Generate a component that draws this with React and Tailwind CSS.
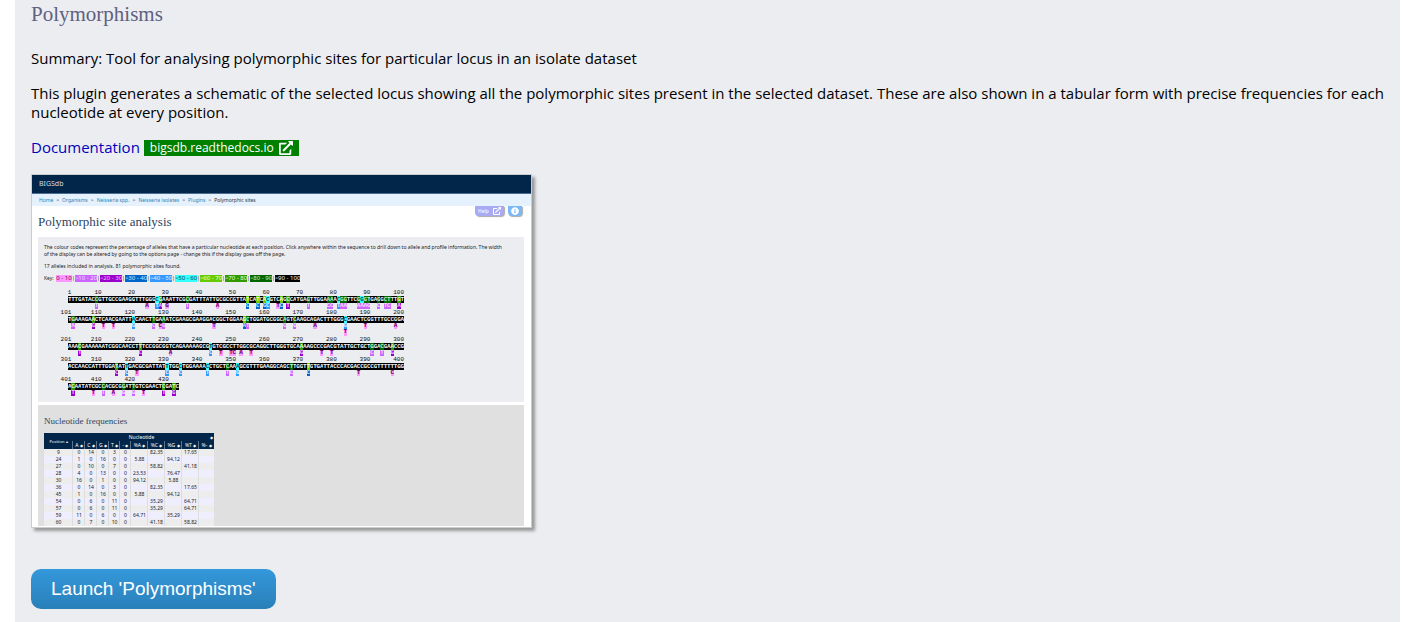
import { FaInfoCircle } from "react-icons/fa";

const PINK = "bg-[#ff99ff] text-[#5a005a]";
const LILAC = "bg-[#cc66ff] text-[#f6dcff]";
const PURPLE = "bg-[#9900cc] text-[#f0c8ff]";
const BLUE = "bg-[#0066cc] text-[#d0e6ff]";
const SKY = "bg-[#3399ff] text-[#e0f0ff]";
const CYAN = "bg-[#33ffff] text-[#004466]";
const LIME = "bg-[#66cc00] text-[#f0ffd8]";
const GREEN = "bg-[#339900] text-[#e0ffd0]";
const FOREST = "bg-[#006600] text-[#c8f0c8]";
const BLACK = "bg-black text-[#f4f4f4]";

const key = [
  ["0 - 10", PINK],
  [">10 - 20", LILAC],
  [">20 - 30", PURPLE],
  [">30 - 40", BLUE],
  [">40 - 50", SKY],
  [">50 - 60", CYAN],
  [">60 - 70", LIME],
  [">70 - 80", GREEN],
  [">80 - 90", FOREST],
  [">90 - 100", BLACK],
];

// Each site: [column, consensus colour, variant letter, variant colour, second variant letter]
const blocks = [
  {
    start: 1,
    seq: "TTTGATACCGTTGCCGAAGGTTTGGGCGAAATTCGCGATTTATTGCGCCGTTATCATCACGTCAGCCATGAGTTGGAAAACGGTTCGGGTGAGGCTTTGT",
    sites: [
      [9, FOREST, "T", LILAC], [24, BLACK, "A", PINK], [27, CYAN, "T", SKY], [28, GREEN, "A", PURPLE],
      [30, BLACK, "G", PINK], [36, FOREST, "T", LILAC], [45, BLACK, "A", PINK], [54, LIME, "C", BLUE],
      [57, LIME, "C", BLUE], [59, LIME, "G", BLUE], [60, CYAN, "C", SKY], [63, BLACK, "T", PINK],
      [64, LIME, "C", BLUE], [66, GREEN, "T", PURPLE], [72, FOREST, "T", LILAC], [78, FOREST, "C", LILAC],
      [79, FOREST, "C", LILAC], [81, CYAN, "T", SKY], [82, FOREST, "A", LILAC], [83, FOREST, "A", LILAC],
      [87, FOREST, "A", LILAC], [88, CYAN, "A", LILAC], [89, FOREST, "A", LILAC], [90, FOREST, "G", LILAC],
      [93, FOREST, "C", LILAC], [95, FOREST, "T", LILAC], [96, FOREST, "C", LILAC], [99, GREEN, "A", PURPLE],
    ],
  },
  {
    start: 101,
    seq: "TGAAAGAACTCAACGAATTACAACTTGAAATCGAAGCGAAGGACGGCTGGAAGCTGGATGCGGCAGTCAAGCAGACTTTGGGCGAACTCGGTTTGCCGGA",
    sites: [
      [2, FOREST, "A", LILAC], [8, GREEN, "G", PURPLE], [11, BLACK, "T", PINK], [14, BLACK, "T", PINK],
      [20, CYAN, "G", SKY], [26, FOREST, "C", LILAC], [28, BLACK, "C", PINK], [29, FOREST, "G", LILAC],
      [44, BLACK, "T", PINK], [53, LIME, "A", BLUE], [54, FOREST, "T", LILAC], [65, FOREST, "G", LILAC],
      [68, FOREST, "G", LILAC], [74, BLACK, "A", PINK], [83, CYAN, "G", SKY, "T"], [89, BLACK, "T", PINK],
      [98, BLACK, "A", PINK],
    ],
  },
  {
    start: 201,
    seq: "AAACGAAAAAATCGGCAACCTTTCCGGCGGTCAGAAAAAGCGTGTCGCCTTGGCGCAGGCTTGGGTGCAAAAGCCCGACGTATTGCTGCTGGACGAACCG",
    sites: [
      [4, GREEN, "T", PURPLE], [22, GREEN, "C", PURPLE], [31, BLACK, "A", PINK], [43, CYAN, "C", SKY],
      [46, BLACK, "T", PINK], [49, BLACK, "T", PINK], [50, BLACK, "C", PINK], [52, BLACK, "A", PINK],
      [55, BLACK, "T", PINK], [70, GREEN, "G", PURPLE], [76, BLACK, "T", PINK], [79, BLACK, "T", PINK],
      [91, FOREST, "C", LILAC], [94, FOREST, "T", LILAC], [97, GREEN, "G", PURPLE],
    ],
  },
  {
    start: 301,
    seq: "ACCAACCATTTGGATATTGACGCGATTATTTGGCTGGAAAACCTGCTCAAAGCGTTTGAAGGCAGCTTGGTTGTGATTACCCACGACCGCCGTTTTTTGG",
    sites: [
      [15, GREEN, "C", PURPLE], [18, CYAN, "C", SKY], [21, BLACK, "T", PINK], [30, CYAN, "C", SKY],
      [34, CYAN, "C", SKY], [42, CYAN, "T", SKY], [48, FOREST, "T", LILAC], [51, CYAN, "G", SKY],
      [67, FOREST, "C", LILAC], [72, LIME, "C", BLUE], [87, BLACK, "T", PINK], [97, BLACK, "C", PINK],
    ],
  },
  {
    start: 401,
    seq: "ACAATATCGCCACGCGGATTGTCGAACTCGATC",
    sites: [
      [2, GREEN, "T", PURPLE], [8, BLACK, "T", PINK], [11, FOREST, "T", LILAC], [14, BLACK, "A", PINK],
      [17, FOREST, "G", LILAC], [20, FOREST, "G", LILAC], [23, BLACK, "T", PINK], [29, GREEN, "T", PURPLE],
      [32, GREEN, "G", PURPLE],
    ],
  },
];

const columns = ["A", "C", "G", "T", "-", "%A", "%C", "%G", "%T", "%-"];

const frequencies = [
  [9, 0, 14, 0, 3, 0, "", "82.35", "", "17.65", ""],
  [24, 1, 0, 16, 0, 0, "5.88", "", "94.12", "", ""],
  [27, 0, 10, 0, 7, 0, "", "58.82", "", "41.18", ""],
  [28, 4, 0, 13, 0, 0, "23.53", "", "76.47", "", ""],
  [30, 16, 0, 1, 0, 0, "94.12", "", "5.88", "", ""],
  [36, 0, 14, 0, 3, 0, "", "82.35", "", "17.65", ""],
  [45, 1, 0, 16, 0, 0, "5.88", "", "94.12", "", ""],
  [54, 0, 6, 0, 11, 0, "", "35.29", "", "64.71", ""],
  [57, 0, 6, 0, 11, 0, "", "35.29", "", "64.71", ""],
  [59, 11, 0, 6, 0, 0, "64.71", "", "35.29", "", ""],
  [60, 0, 7, 0, 10, 0, "", "41.18", "", "58.82", ""],
];

function ExternalLinkIcon({ className }) {
  return (
    <svg viewBox="0 0 512 512" className={className} fill="currentColor" aria-hidden="true">
      <path d="M448 279V464a48 48 0 0 1-48 48H48a48 48 0 0 1-48-48V112a48 48 0 0 1 48-48h248l-64 64H64v320h320V343zM488 0H364c-21 0-32 26-17 41l36 36-243.500 243.500a24 24 0 0 0 0 34L157.500 372.500a24 24 0 0 0 34 0L435 129l36 36c15 15 41 4.500 41-17V24a24 24 0 0 0-24-24z" />
    </svg>
  );
}

function SequenceBlock({ start, seq, sites }) {
  const colours = Object.fromEntries(sites.map(([pos, colour]) => [pos, colour]));
  const labels = [1];
  for (let n = 10; n <= seq.length; n += 10) labels.push(n);
  const second = sites.filter((site) => site[4]);
  return (
    <div className="w-[336px]">
      <div className="grid h-[7px] grid-cols-[repeat(100,minmax(0,1fr))] text-[6px] leading-[7px] text-[#111]">
        {labels.map((n) => (
          <span key={n} className="flex justify-end" style={{ gridColumnStart: n, gridRowStart: 1 }}>
            {start + n - 1}
          </span>
        ))}
      </div>
      <div className="grid h-[7px] grid-cols-[repeat(100,minmax(0,1fr))] text-[6px] leading-[7px] font-bold">
        {[...seq].map((base, i) => (
          <span key={i} className={`flex justify-center ${colours[i + 1] || BLACK}`}>
            {base}
          </span>
        ))}
      </div>
      <div className="grid h-[6px] grid-cols-[repeat(100,minmax(0,1fr))] text-[6px] leading-[6px] font-bold">
        {sites.map(([pos, , base, colour]) => (
          <span key={pos} className={`flex justify-center ${colour}`} style={{ gridColumnStart: pos, gridRowStart: 1 }}>
            {base}
          </span>
        ))}
      </div>
      {second.length > 0 && (
        <div className="grid h-[7px] grid-cols-[repeat(100,minmax(0,1fr))] text-[6px] leading-[6px] font-bold">
          {second.map((site) => (
            <span key={site[0]} className={`flex justify-center ${PINK}`} style={{ gridColumnStart: site[0] }}>
              {site[4]}
            </span>
          ))}
        </div>
      )}
    </div>
  );
}

function FrequencyTable() {
  return (
    <table className="mt-[6px] w-[170px] table-fixed border-collapse text-center text-[5px] leading-[7px] text-[#222]">
      <colgroup>
        <col className="w-[29px]" />
        <col className="w-[12px]" />
        <col className="w-[12px]" />
        <col className="w-[12px]" />
        <col className="w-[11px]" />
        <col className="w-[11px]" />
        <col className="w-[17px]" />
        <col className="w-[17px]" />
        <col className="w-[17px]" />
        <col className="w-[17px]" />
        <col className="w-[15px]" />
      </colgroup>
      <thead className="bg-[#02264a] text-white">
        <tr className="h-[8px]">
          <th rowSpan={2} className="p-0 text-[4px] font-normal">Position ▴</th>
          <th colSpan={10} className="p-0 font-normal">
            <div className="flex items-center pr-px">
              <span className="flex-1">Nucleotide</span>
              <span className="text-[4px]">◆</span>
            </div>
          </th>
        </tr>
        <tr className="h-[8px]">
          {columns.map((name) => (
            <th key={name} className="p-0 font-normal whitespace-nowrap shadow-[-1px_0_0_#5c7590]">
              {name} <span className="text-[4px]">◆</span>
            </th>
          ))}
        </tr>
      </thead>
      <tbody>
        {frequencies.map((row) => (
          <tr key={row[0]} className="h-[7px] odd:bg-[#ededed] even:bg-[#eeeeff]">
            {row.map((value, i) => (
              <td key={i} className="p-0 shadow-[-1px_0_0_#dedede]">{value}</td>
            ))}
          </tr>
        ))}
      </tbody>
    </table>
  );
}

function AnalysisPreview() {
  return (
    <figure className="mt-[17px] h-[354px] w-[501px] overflow-hidden border border-[#cccccc] bg-white font-['Noto_Sans',sans-serif] text-[5px] shadow-[3px_3px_3px_#999999]">
      <div className="flex h-[19px] items-center border-b border-[#4a6d94] bg-[#02264a] pl-[7px] text-[7px] leading-[16px] text-[#d5dce5]">
        BIGSdb
      </div>
      <div className="flex h-[12px] items-center gap-[3px] bg-[#e6f1fe] pl-[7px] text-[#2a84b4]">
        {["Home", "Organisms", "Neisseria spp.", "Neisseria isolates", "Plugins"].map((crumb) => (
          <span key={crumb} className="flex gap-[3px]">
            {crumb} <span className="text-[#333]">&gt;</span>
          </span>
        ))}
        <span className="text-[#333]">Polymorphic sites</span>
      </div>
      <div className="flex h-[31px] justify-between pr-[9px] pl-[6px]">
        <h3 className="pt-[7px] font-['Liberation_Serif',serif] text-[13px] leading-[18px] text-[#2c4460]">
          Polymorphic site analysis
        </h3>
        <div className="flex gap-[4px]">
          <span className="flex h-[10px] w-[29px] items-center justify-center gap-[4px] rounded-b-sm bg-[#aaaaf4] text-[5px] text-white shadow-[1px_1px_1px_#aaa]">
            Help <ExternalLinkIcon className="size-[8px]" />
          </span>
          <span className="flex h-[10px] w-[14px] items-center justify-center rounded-b-sm bg-[#7ab8f8] text-white shadow-[1px_1px_1px_#aaa]">
            <FaInfoCircle className="size-[8px]" />
          </span>
        </div>
      </div>
      <div className="mr-[7px] ml-[6px] h-[165px] bg-[#ecedf1] px-[6px] pt-[7px] leading-[7px] text-[#222]">
        <p className="pr-[16px]">
          The colour codes represent the percentage of alleles that have a particular nucleotide at each position. Click
          anywhere within the sequence to drill down to allele and profile information. The width of the display can be
          altered by going to the options page - change this if the display goes off the page.
        </p>
        <p className="mt-[5px]">17 alleles included in analysis. 81 polymorphic sites found.</p>
        <div className="mt-[5px] flex h-[7px] items-center">
          <span className="w-[12px]">Key:</span>
          {key.map(([label, colour], i) => (
            <span key={label} className="flex">
              {i > 0 && <span className="w-[3px] text-center">|</span>}
              <span
                className={`flex justify-center text-[6px] whitespace-nowrap ${i === 0 ? "w-[16px]" : i === 9 ? "w-[25px]" : "w-[22px]"} ${colour}`}
              >
                {label}
              </span>
            </span>
          ))}
        </div>
        <div className="mt-[7px] ml-[24px] font-['Liberation_Mono',monospace]">
          {blocks.map((block) => (
            <SequenceBlock key={block.start} {...block} />
          ))}
        </div>
      </div>
      <div className="mt-[3px] mr-[7px] ml-[6px] bg-[#e0e0e0] px-[6px] pt-[10px]">
        <h4 className="font-['Liberation_Serif',serif] text-[9px] leading-[12px] text-[#2c4460]">
          Nucleotide frequencies
        </h4>
        <FrequencyTable />
      </div>
    </figure>
  );
}

export default function App() {
  return (
    <div className="min-h-screen bg-white pr-[13px] pl-[15px]">
      <main className="min-h-screen bg-[#ecedf1] px-4 pb-[13px] font-['Open_Sans',sans-serif] text-[15px] leading-[19px] text-black">
        <h2 className="font-['Liberation_Serif',serif] text-[21px] leading-7 text-[#606080]">Polymorphisms</h2>
        <p className="mt-[21px]">
          Summary: Tool for analysing polymorphic sites for particular locus in an isolate dataset
        </p>
        <p className="mt-4">
          This plugin generates a schematic of the selected locus showing all the polymorphic sites present in the
          selected dataset. These are also shown in a tabular form with precise frequencies for each nucleotide at every
          position.
        </p>
        <p className="mt-4 flex items-center gap-1">
          <a href="#documentation" className="text-[#0000bb]">
            Documentation
          </a>
          <a
            href="#readthedocs"
            className="flex h-4 items-center gap-[5px] bg-[#008000] px-[6px] text-[12px] leading-4 text-white"
          >
            bigsdb.readthedocs.io <ExternalLinkIcon className="size-[14px]" />
          </a>
        </p>
        <AnalysisPreview />
        <button
          type="button"
          className="mt-[41px] h-10 rounded-[10px] bg-linear-to-b from-[#3498db] to-[#2980b9] px-5 font-['Liberation_Sans',sans-serif] text-[19px] leading-10 text-white"
        >
          Launch 'Polymorphisms'
        </button>
      </main>
    </div>
  );
}
